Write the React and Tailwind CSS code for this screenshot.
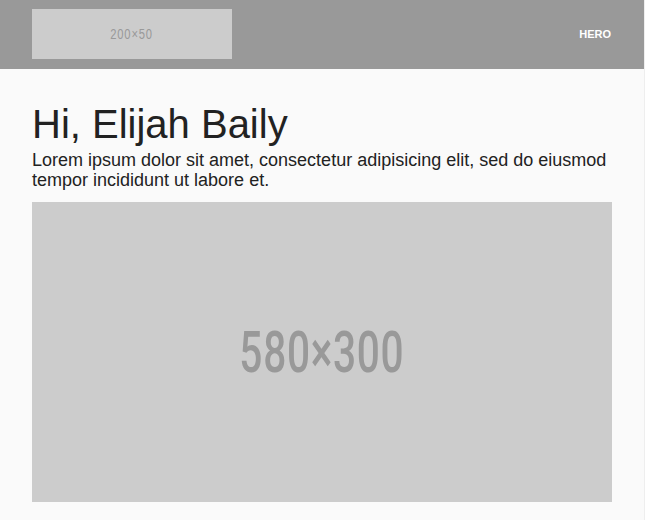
import React from 'react';

function Placeholder({ w, h, label, textClass }) {
  return (
    <div
      className="flex items-center justify-center bg-[#cccccc] text-[#999999]"
      style={{ width: w, height: h }}
    >
      <span className={textClass}>{label}</span>
    </div>
  );
}

export default function App() {
  return (
    <div className="min-h-[520px] w-[645px] bg-[#fafafa] border-r border-[#eeeeee] font-[Liberation_Sans,Arial,sans-serif] text-[#222222]">
      {/* Header */}
      <header className="flex h-[69px] items-center justify-between bg-[#999999] pl-8 pr-[33px]">
        <div className="mb-[1px]">
          <Placeholder w={200} h={50} label="200×50" textClass="inline-block scale-x-[0.8] text-[14px] tracking-[1px]" />
        </div>
        <span className="text-[11px] font-bold text-white">HERO</span>
      </header>

      {/* Content */}
      <main className="px-8 pt-[33px]">
        <h1 className="text-[40px] leading-[44px]">Hi, Elijah Baily</h1>
        <p className="mt-[4px] w-[580px] text-[18px] leading-[20px]">
          Lorem ipsum dolor sit amet, consectetur adipisicing elit, sed do eiusmod tempor incididunt ut labore et.
        </p>
        <div className="mt-[12px]">
          <Placeholder w={580} h={300} label="580×300" textClass="inline-block scale-x-[0.7] font-[Roboto,sans-serif] text-[58px] font-medium leading-none tracking-[1px]" />
        </div>
      </main>
    </div>
  );
}
